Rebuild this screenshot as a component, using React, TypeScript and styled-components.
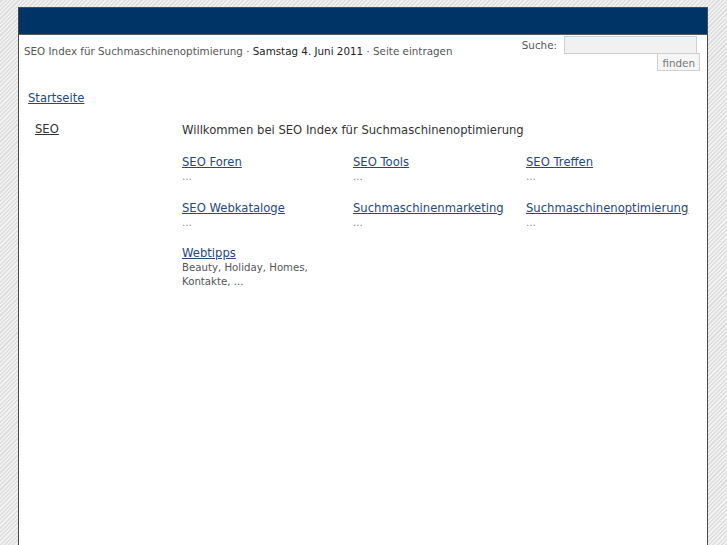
import React from 'react';
import styled, { createGlobalStyle } from 'styled-components';

const GlobalStyle = createGlobalStyle`
  html, body {
    margin: 0;
    padding: 0;
  }
  body {
    font-family: "DejaVu Sans", Verdana, sans-serif;
    background-color: #ececec;
    background-image: repeating-linear-gradient(
      -45deg,
      #f2f2f2 0px,
      #f2f2f2 1.5px,
      #dedede 1.5px,
      #dedede 3px
    );
  }
`;

const Page = styled.div`
  padding-top: 7px;
  padding-left: 18px;
`;

const Container = styled.div`
  width: 688px;
  min-height: 560px;
  background: #fff;
  border: 1px solid #4a4a4a;
  border-bottom: none;
`;

const Header = styled.div`
  height: 26px;
  background: #003366;
  border-bottom: 1px solid #5a5a5a;
`;

const TopBar = styled.div`
  display: flex;
  justify-content: space-between;
  align-items: flex-start;
  padding: 0 7px 0 5px;
  font-size: 10.35px;
  color: #555;
`;

const Breadcrumb = styled.div`
  margin-top: 10px;
`;

const Strong = styled.span`
  color: #222;
`;

const SearchForm = styled.form`
  display: flex;
  flex-direction: column;
  align-items: flex-end;
  margin-top: 1px;
`;

const SearchRow = styled.div`
  display: flex;
  align-items: center;
  gap: 7px;
  margin-right: 3px;
`;

const SearchInput = styled.input`
  width: 129px;
  height: 14px;
  border: 1px solid #cfcfcf;
  background: #f1f1f1;
  padding: 1px;
`;

const SearchButton = styled.button`
  font-family: "DejaVu Sans", Verdana, sans-serif;
  font-size: 10.35px;
  color: #777;
  background: #f6f6f6;
  border: 1px solid #cfcfcf;
  padding: 2px 4px 0;
  height: 18px;
  margin-top: -1px;
`;

const Crumbs = styled.div`
  padding: 20px 0 0 9px;
  font-size: 11.6px;
  line-height: 15px;
`;

const Link = styled.a<{ $muted?: boolean }>`
  color: ${p => (p.$muted ? '#333' : '#27497a')};
  text-decoration: underline;
  cursor: pointer;
`;

const Body = styled.div`
  display: flex;
  padding-top: 15px;
`;

const Sidebar = styled.div`
  width: 147px;
  padding-left: 16px;
  padding-top: 1px;
  font-size: 11.6px;
  line-height: 15px;
`;

const Main = styled.div`
  flex: 1;
  padding-top: 2px;
  font-size: 11.6px;
  line-height: 15px;
  color: #333;
`;

const Welcome = styled.div`
  margin-bottom: 17px;
`;

const Grid = styled.div`
  display: grid;
  grid-template-columns: 171px 173px 172px;
  row-gap: 16.5px;
`;

const Cell = styled.div`
  padding-right: 16px;
`;

const Desc = styled.div<{ $dark?: boolean }>`
  font-size: 10.2px;
  line-height: 14px;
  color: ${p => (p.$dark ? '#555' : '#888')};
`;

const categories: { title: string; desc: string }[] = [
  { title: 'SEO Foren', desc: '...' },
  { title: 'SEO Tools', desc: '...' },
  { title: 'SEO Treffen', desc: '...' },
  { title: 'SEO Webkataloge', desc: '...' },
  { title: 'Suchmaschinenmarketing', desc: '...' },
  { title: 'Suchmaschinenoptimierung', desc: '...' },
  { title: 'Webtipps', desc: 'Beauty, Holiday, Homes, Kontakte, ...' },
];

const App: React.FC = () => {
  return (
    <Page>
      <GlobalStyle />
      <Container>
        <Header />
        <TopBar>
          <Breadcrumb>
            SEO Index für Suchmaschinenoptimierung · <Strong>Samstag 4. Juni 2011</Strong> · Seite eintragen
          </Breadcrumb>
          <SearchForm onSubmit={e => e.preventDefault()}>
            <SearchRow>
              <span>Suche:</span>
              <SearchInput type="text" />
            </SearchRow>
            <SearchButton type="submit">finden</SearchButton>
          </SearchForm>
        </TopBar>
        <Crumbs>
          <Link>Startseite</Link>
        </Crumbs>
        <Body>
          <Sidebar>
            <Link $muted>SEO</Link>
          </Sidebar>
          <Main>
            <Welcome>Willkommen bei SEO Index für Suchmaschinenoptimierung</Welcome>
            <Grid>
              {categories.map(c => (
                <Cell key={c.title}>
                  <Link>{c.title}</Link>
                  <Desc $dark={c.desc.length > 3}>{c.desc}</Desc>
                </Cell>
              ))}
            </Grid>
          </Main>
        </Body>
      </Container>
    </Page>
  );
};

export default App;
